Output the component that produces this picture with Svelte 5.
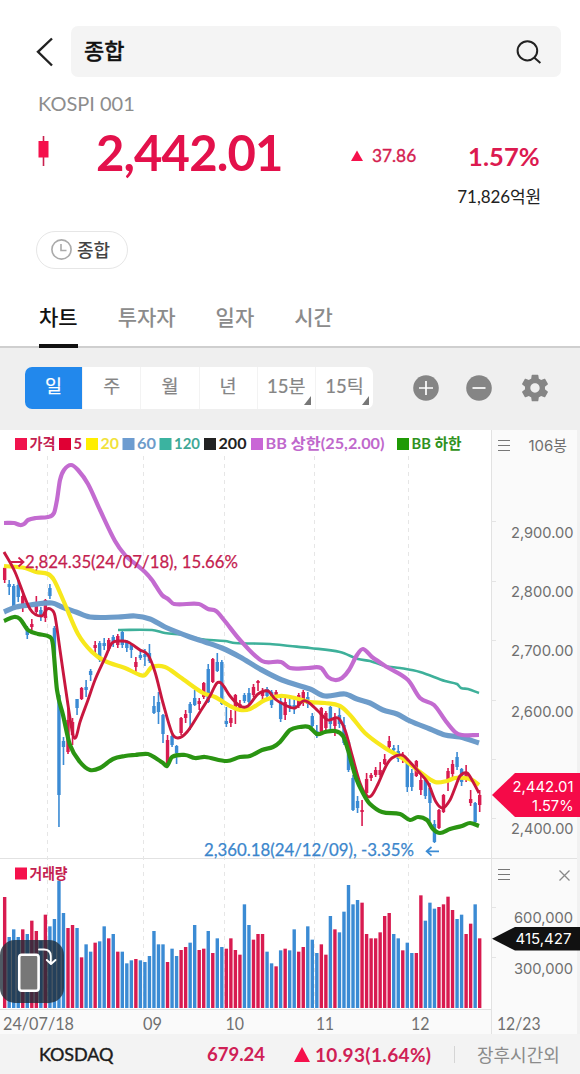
<script>
  const RED = '#d81b50';
  const BLUE = '#3b8bd4';
  const FIRST = 4.67;
  const STEP = 4.524;
  const xAt = (i) => FIRST + i * STEP;

  // high, body top, body bottom, low, direction
  const candles = [
    [567,568,580,583,'r'],[580,584,587,595,'b'],[584,586,606,609,'b'],[581,585,597,602,'b'],[591,596,606,612,'r'],
    [626,628,635,639,'b'],[619,624,627,631,'r'],[596,603,612,615,'r'],[607,610,615,621,'b'],[599,600,618,622,'r'],
    [584,588,596,599,'b'],[626,628,655,660,'b'],[694,695,795,827,'b'],[737,741,747,765,'b'],[703,720,752,754,'r'],
    [718,722,735,745,'r'],[699,699,708,715,'b'],[687,688,699,700,'r'],[680,687,690,697,'b'],[669,671,675,681,'b'],
    [641,645,648,653,'r'],[641,643,660,662,'b'],[638,643,646,650,'b'],[638,640,649,651,'r'],[635,637,643,647,'b'],
    [634,636,645,648,'r'],[630,632,645,648,'b'],[640,642,648,652,'b'],[643,645,650,658,'b'],[657,662,667,672,'r'],
    [650,655,658,660,'b'],[649,654,657,666,'b'],[644,653,661,663,'b'],[696,706,713,714,'b'],[692,702,712,724,'b'],
    [714,715,734,743,'b'],[735,740,765,767,'r'],[734,736,745,747,'b'],[745,746,753,764,'b'],[717,718,733,735,'r'],
    [710,714,718,723,'r'],[702,704,713,730,'b'],[690,698,705,706,'b'],[698,701,704,710,'r'],[682,683,697,699,'r'],
    [664,669,702,703,'b'],[658,659,682,683,'r'],[653,662,671,672,'b'],[660,662,704,705,'b'],[707,721,724,727,'b'],
    [710,718,723,727,'r'],[694,695,710,724,'r'],[700,704,708,712,'r'],[693,695,701,703,'b'],[688,693,702,704,'b'],
    [684,687,695,697,'r'],[680,681,683,691,'r'],[688,691,696,700,'r'],[687,689,696,700,'b'],[690,692,705,708,'b'],
    [690,692,697,700,'r'],[697,701,719,722,'b'],[697,702,715,720,'r'],[698,705,708,712,'b'],[697,705,709,714,'b'],
    [693,695,706,708,'r'],[690,692,703,706,'r'],[692,697,704,708,'b'],[713,716,726,727,'b'],[725,731,736,738,'b'],
    [707,708,733,735,'r'],[711,713,728,733,'r'],[706,707,724,733,'b'],[713,719,726,736,'r'],[705,715,724,728,'b'],
    [717,725,743,745,'b'],[740,742,770,772,'b'],[775,778,810,811,'b'],[796,801,808,813,'b'],[800,810,812,826,'r'],
    [773,779,793,795,'r'],[773,775,778,781,'r'],[767,770,775,777,'r'],[762,770,775,777,'r'],[754,759,764,765,'r'],
    [736,741,747,749,'r'],[745,748,750,753,'b'],[745,751,759,762,'b'],[752,755,758,763,'r'],[761,763,787,792,'b'],
    [769,773,787,791,'b'],[760,761,776,777,'r'],[772,780,790,795,'r'],[777,780,796,799,'b'],[783,788,803,821,'b'],
    [820,824,842,843,'b'],[809,810,828,829,'r'],[794,795,812,813,'r'],[768,771,781,791,'r'],[760,764,774,777,'r'],
    [752,757,767,770,'b'],[768,769,782,786,'b'],[765,772,779,782,'r'],[790,799,803,806,'r'],[802,803,822,826,'b'],
    [790,795,805,812,'r'],
  ];

  // volume bar heights, in thirds of a pixel, measured up from the base line
  const volumes = [
    333,213,236,213,236,222,262,231,202,280,245,267,382,285,240,249,240,152,191,169,196,200,245,209,222,169,169,134,143,147,
    143,138,156,231,191,191,138,178,156,174,183,196,249,174,178,231,165,209,183,178,209,174,160,311,249,205,222,222,169,134,
    125,173,178,173,236,169,183,245,205,165,191,160,276,236,227,289,369,311,324,316,222,209,209,227,276,285,222,209,173,196,
    165,165,338,262,316,298,303,311,334,294,267,280,222,253,311,209,
  ];
  const volumeColors = [
    'rbbbrbrrbr', 'bbbbrrbrbb', 'rbbrbrbbbr', 'bbbbbbrbbr', 'rbbrrbrbbr', 'rrrbbrrrbb',
    'rbrbbrrbbb', 'rrbrbbbbbr', 'rrrrrrbbrb', 'brrbbbrrrr', 'bbrrbr',
  ].join('');

  const lines = [
    { color: '#3eb09a', width: 2.6, pts: [118,630,152,630,165,633,185,635,200,639,225,641,235,643,270,644,290,646,310,648,340,652,358,659,370,661,385,666,400,668,420,672,445,681,457,684,461,688,468,689,479,693] },
    { color: '#6d9cca', width: 5.2, pts: [4,612,16,607,30,605,52,603,62,607,76,612,90,617,118,617,135,616,150,619,165,627,190,637,205,642,222,648,240,657,260,669,282,680,310,689,325,696,345,694,357,699,370,703,383,710,397,714,410,721,430,729,445,735,460,737,479,743] },
    { color: '#f7e81c', width: 4.2, pts: [4,566,25,568,36,572,48,574,54,580,64,602,78,634,92,652,105,661,125,668,140,675,145,675,152,667,165,667,180,677,203,693,215,697,230,706,240,710,250,709,265,700,280,696,295,698,310,702,325,703,340,706,350,715,365,733,385,748,402,758,420,772,435,782,447,781,455,778,465,778,472,780,479,785] },
    { color: '#c8173f', width: 2.9, pts: [4,552,15,572,30,609,42,616,47,609,52,610,55,616,60,650,68,705,73,735,76,737,80,722,88,700,95,680,105,658,112,643,120,641,128,642,140,650,148,655,155,672,163,703,172,733,178,738,187,732,200,712,210,696,217,683,222,684,230,696,240,706,248,706,258,694,268,691,275,699,285,705,295,708,303,701,308,702,318,711,328,720,338,718,345,730,352,755,360,783,367,796,372,795,378,784,386,766,392,758,402,755,408,760,418,771,428,783,436,802,443,808,450,800,455,788,460,776,467,773,472,780,479,793] },
    { color: '#c36bd0', width: 4.2, pts: [4,523,14,523,20,525,24,524,28,520,36,518,48,517,54,513,57,500,60,480,64,470,71,465,78,470,88,484,100,510,115,541,125,555,133,562,145,572,152,580,154,583,162,595,168,599,174,604,199,604,208,609,216,611,224,620,240,640,262,661,281,662,290,668,308,668,321,668,328,677,335,680,342,678,349,670,357,655,363,649,372,657,387,667,408,680,420,698,434,705,445,720,455,732,462,735,479,735] },
    { color: '#2a9412', width: 4.2, pts: [4,621,14,617,20,619,28,630,38,634,50,637,53,645,57,690,63,715,70,745,80,762,90,770,100,768,113,759,125,756,135,755,148,754,157,759,163,763,167,766,172,757,185,755,195,758,205,757,227,761,240,757,250,756,262,750,273,747,280,742,290,730,300,727,309,727,317,734,325,732,335,731,343,736,348,750,356,778,364,795,370,804,382,812,400,814,410,820,418,817,427,820,433,829,440,833,450,829,462,826,470,823,479,826] },
  ];

  // smooth path through the points, tangents taken from each point's neighbours
  function curve(p) {
    const n = p.length / 2;
    const m = [];
    for (let i = 0; i < n; i++) {
      const a = Math.max(0, i - 1);
      const b = Math.min(n - 1, i + 1);
      m.push((p[b * 2 + 1] - p[a * 2 + 1]) / (p[b * 2] - p[a * 2]));
    }
    let d = `M${p[0]} ${p[1]}`;
    for (let i = 1; i < n; i++) {
      const x0 = p[i * 2 - 2], y0 = p[i * 2 - 1], x1 = p[i * 2], y1 = p[i * 2 + 1];
      const h = (x1 - x0) / 3;
      d += `C${x0 + h} ${y0 + m[i - 1] * h} ${x1 - h} ${y1 - m[i] * h} ${x1} ${y1}`;
    }
    return d;
  }

  const legend = [
    { x: 15, text: '가격', w: 26, color: '#c4214f', box: '#f0134d' },
    { x: 59, text: '5', w: 8.5, color: '#c4214f', box: '#e00034' },
    { x: 86, text: '20', w: 18.5, color: '#f1e23c', box: '#ffee00' },
    { x: 122.5, text: '60', w: 19, color: '#6d9cca', box: '#6d9cd0' },
    { x: 159.5, text: '120', w: 26, color: '#3fa896', box: '#3bb3a0' },
    { x: 204, text: '200', w: 28, color: '#222', box: '#222' },
    { x: 251, text: 'BB 상한(25,2.00)', w: 119, color: '#bf68cc', box: '#c966d6' },
    { x: 397, text: 'BB 하한', w: 50, color: '#2f9220', box: '#1f9a05' },
  ];
  const priceAxis = [
    ['2,900.00', 533], ['2,800.00', 592], ['2,700.00', 651], ['2,600.00', 711.5], ['2,400.00', 829],
  ];
  const months = [['24/07/18', 3, 71], ['09', 143, 19], ['10', 225.5, 18.5], ['11', 316, 18], ['12', 411, 18.5]];
  const grid = [47.5, 143.5, 224.5, 314.5, 408.5];
  const tabs = ['차트', '투자자', '일자', '시간'];
  const periods = ['일', '주', '월', '년', '15분', '15틱'];
</script>

<main>
  <header>
    <svg class="back" width="18" height="30" viewBox="0 0 18 30"><path d="M16 1.5L2 14.8L16 28.5" /></svg>
    <div class="search">
      <span>종합</span>
      <svg width="28" height="26" viewBox="0 0 28 26"><ellipse cx="12.4" cy="11.8" rx="9.8" ry="9.6" /><path d="M19.4 18.8L25.4 24" /></svg>
    </div>
  </header>

  <div class="code">KOSPI 001</div>
  <section class="quote">
    <svg class="candle" width="12" height="30" viewBox="0 0 12 30"><path d="M5.5 0V30" stroke="#c9204e" stroke-width="1.6" /><rect x="0.5" y="5" width="10" height="16.5" fill="#f5114c" /></svg>
    <strong class="price">2,442.01</strong>
    <span class="change"><svg width="12" height="11"><path d="M6 .5L12 11H0Z" fill="#f5114c" /></svg>37.86</span>
    <strong class="rate">1.57%</strong>
  </section>
  <div class="amount">71,826억원</div>

  <div class="chips">
    <button class="chip">
      <svg width="21" height="21" viewBox="0 0 21 21"><circle cx="10.5" cy="10.5" r="9.6" /><path d="M10 5V11.5H15.5" /></svg>
      종합
    </button>
  </div>

  <nav>
    {#each tabs as tab, i}
      <span class:active={i === 0}>{tab}</span>
    {/each}
  </nav>

  <section class="toolbar">
    <div class="periods">
      {#each periods as p, i}
        <span class:on={i === 0} class:more={i > 3}>{p}</span>
      {/each}
    </div>
    <svg class="tool" width="26" height="26" viewBox="0 0 26 26"><circle cx="13" cy="13" r="12.8" fill="#858585" /><path d="M6 13H20M13 6V20" stroke="#fff" stroke-width="1.7" /></svg>
    <svg class="tool" width="26" height="26" viewBox="0 0 26 26"><circle cx="13" cy="13" r="12.8" fill="#858585" /><path d="M6.5 13H19.5" stroke="#fff" stroke-width="1.7" /></svg>
    <svg class="tool gear" width="32" height="32" viewBox="0 0 24 24"><path fill="#858585" d="M19.43 12.98c.04-.32.07-.64.07-.98s-.03-.66-.07-.98l2.11-1.65c.19-.15.24-.42.12-.64l-2-3.46c-.12-.22-.39-.3-.61-.22l-2.49 1c-.52-.4-1.08-.73-1.69-.98l-.38-2.65C14.46 2.18 14.25 2 14 2h-4c-.25 0-.46.18-.49.42l-.38 2.65c-.61.25-1.17.59-1.69.98l-2.49-1c-.23-.09-.49 0-.61.22l-2 3.46c-.13.22-.07.49.12.64l2.11 1.65c-.04.32-.07.65-.07.98s.03.66.07.98l-2.11 1.65c-.19.15-.24.42-.12.64l2 3.46c.12.22.39.3.61.22l2.49-1c.52.4 1.08.73 1.69.98l.38 2.65c.03.24.24.42.49.42h4c.25 0 .46-.18.49-.42l.38-2.65c.61-.25 1.17-.59 1.69-.98l2.49 1c.23.09.49 0 .61-.22l2-3.46c.12-.22.07-.49-.12-.64l-2.11-1.65zM12 15.5c-1.93 0-3.5-1.57-3.5-3.5s1.57-3.5 3.5-3.5 3.5 1.57 3.5 3.5-1.57 3.5-3.5 3.5z" /></svg>
  </section>

  <svg class="chart" width="580" height="604" viewBox="0 430 580 604">
    <rect x="0" y="1009" width="580" height="25" fill="#fafafa" />
    <rect x="491" y="430" width="89" height="604" fill="#fafafa" />
    <path d="M491.5 430V1034M0 858.5H580M0 1009.5H491" stroke="#e2e2e2" fill="none" />
    <path d="M578.5 430V1034" stroke="#f1f1f1" stroke-width="3" />
    <g stroke="#e6e6e6" stroke-dasharray="4 4">
      {#each grid as x}<path d="M{x} 456V1009" />{/each}
    </g>
    {#each [521.5, 581.5, 640.5, 700.5, 759.5, 818.5, 907.5, 957.5] as y}
      <path d="M491 {y}H496" stroke="#e4e4e4" />
    {/each}

    {#each candles as [h, t, b, l, c], i}
      <g fill={c === 'r' ? RED : BLUE}>
        <rect x={xAt(i) - 0.8} y={h} width="1.6" height={l - h} />
        <rect x={xAt(i) - 1.7} y={t} width="3.4" height={b - t} />
      </g>
    {/each}
    {#each lines as line}
      <path d={curve(line.pts)} fill="none" stroke={line.color} stroke-width={line.width} stroke-linejoin="round" />
    {/each}

    {#each volumes as v, i}
      <rect x={xAt(i) - 1.7} y={1008 - v / 3} width="3.4" height={v / 3} fill={volumeColors[i] === 'r' ? RED : BLUE} />
    {/each}

    <g class="legend">
      {#each legend as item}
        <rect x={item.x} y="438" width="12" height="12" fill={item.box} />
        <text x={item.x + 14.5} y="449" fill={item.color} textLength={item.w} lengthAdjust="spacingAndGlyphs">{item.text}</text>
      {/each}
      <rect x="15" y="867.5" width="12" height="12" fill="#f5114c" />
      <text x="29.5" y="878.5" fill="#c4214f" textLength="38" lengthAdjust="spacingAndGlyphs">거래량</text>
    </g>

    <g class="note">
      <path d="M10 562H23M18.5 557.5L23.5 562L18.5 566.5" stroke="#d01c4c" stroke-width="1.8" fill="none" />
      <text x="25" y="568" fill="#c4214f" stroke="#c4214f" textLength="213" lengthAdjust="spacingAndGlyphs">2,824.35(24/07/18), 15.66%</text>
      <text x="204" y="856" fill="#3b86cc" stroke="#3b86cc" textLength="210" lengthAdjust="spacingAndGlyphs">2,360.18(24/12/09), -3.35%</text>
      <path d="M439 851.3H427M431.5 847L426.7 851.3L431.5 855.6" stroke="#3b8bd4" stroke-width="1.8" fill="none" />
    </g>

    <g class="axis">
      <path d="M498 440.5H510M498 445.5H510M498 450.5H510M498 869.5H510M498 874.5H510M498 879.5H510" stroke="#777" stroke-width="1.2" />
      <path d="M559.5 870.5L569.5 880.5M569.5 870.5L559.5 880.5" stroke="#888" stroke-width="1.3" />
      <text x="528.5" y="451" textLength="38.5" lengthAdjust="spacingAndGlyphs">106봉</text>
      {#each priceAxis as [label, y]}
        <text x="511" y={y + 5.2} textLength="62.5" lengthAdjust="spacingAndGlyphs">{label}</text>
      {/each}
      <text x="514" y="923" textLength="59" lengthAdjust="spacingAndGlyphs">600,000</text>
      <text x="514" y="973.5" textLength="59" lengthAdjust="spacingAndGlyphs">300,000</text>
      <path d="M492 795L515 773H580V817H515Z" fill="#f50a48" />
      <text class="light" x="512.5" y="791.5" textLength="61" lengthAdjust="spacingAndGlyphs">2,442.01</text>
      <text class="light" x="532" y="811" textLength="41.5" lengthAdjust="spacingAndGlyphs">1.57%</text>
      <path d="M492 938.7L515 927H580V950.5H515Z" fill="#111" />
      <text class="light" x="515.5" y="944" textLength="56" lengthAdjust="spacingAndGlyphs">415,427</text>
    </g>

    <g class="dates">
      {#each months as [m, x, w]}
        <text {x} y="1029.5" textLength={w} lengthAdjust="spacingAndGlyphs">{m}</text>
      {/each}
      <text x="497" y="1029.5" textLength="43.5" lengthAdjust="spacingAndGlyphs">12/23</text>
    </g>

    <g fill="none" stroke="#fff" stroke-linecap="round" stroke-linejoin="round">
      <rect x="0" y="940" width="64" height="63" rx="15" fill="#1e2b38" fill-opacity=".78" stroke="none" />
      <rect x="19.2" y="954.7" width="19.4" height="36" rx="2.5" fill="#777" stroke-width="2.6" />
      <path d="M39 949.5H44Q50.5 949.5 50.8 956V963M46.8 960L51 964L55.5 960" stroke-width="1.9" />
    </g>
  </svg>

  <footer>
    <b class="name">KOSDAQ</b>
    <b class="index">679.24</b>
    <b class="diff"><svg width="16" height="15"><path d="M8 0L16 15H0Z" fill="#f5114c" /></svg>10.93(1.64%)</b>
    <i></i>
    <span>장후시간외</span>
  </footer>
</main>

<style>
  :global(body) { margin: 0; background: #fff; }
  main {
    width: 580px;
    height: 1074px;
    overflow: hidden;
    font-family: Lato, "Noto Sans CJK KR", sans-serif;
    color: #222;
  }
  svg { display: block; flex: none; }
  header { display: flex; align-items: center; padding: 26px 19px 0 36px; height: 51px; }
  .back { margin-right: 17px; fill: none; stroke: #222; stroke-width: 2.4; }
  .search {
    flex: 1; height: 51px; border-radius: 7px; background: #f4f4f4; box-sizing: border-box;
    display: flex; align-items: center; justify-content: space-between; padding: 0 18px 0 13px;
    font-size: 22px; font-weight: 500; color: #111;
  }
  .search span { padding-bottom: 5px; -webkit-text-stroke: .3px; }
  .search svg { fill: none; stroke: #222; stroke-width: 2; }
  .code { margin-top: 12px; padding-left: 38px; height: 28px; line-height: 29px; font-size: 20px; color: #8d8d8d; }
  .quote { display: flex; align-items: center; height: 60px; margin-top: 6px; padding-left: 38px; color: #e3114b; }
  .candle { margin-right: 46px; margin-top: -4px; }
  .price { width: 255px; font-size: 49px; line-height: 60px; letter-spacing: -0.9px; padding-bottom: 2px; }
  .change { display: flex; align-items: center; gap: 9px; width: 117px; font-size: 17.3px; padding-top: 5px; color: #d41d50; -webkit-text-stroke: .35px; }
  .rate { font-size: 25.5px; letter-spacing: .1px; padding-top: 6px; color: #dc1a50; }
  .amount { height: 24px; line-height: 25px; margin-top: 1px; padding-right: 39px; text-align: right; font-size: 17px; letter-spacing: -.1px; }
  .chips { padding: 23px 36px 0; height: 38px; }
  .chip {
    display: flex; align-items: center; gap: 5px; width: 92px; height: 38px; box-sizing: border-box; padding: 0 0 2px 14px;
    border: 1.5px solid #e6e6e6; border-radius: 19px; background: #fff; font: 500 18px "Noto Sans CJK KR", sans-serif; color: #444;
    white-space: nowrap;
  }
  .chip svg { fill: none; stroke: #aaa; stroke-width: 1.6; }
  nav {
    display: flex; gap: 40px; height: 79px; box-sizing: border-box; border-bottom: 2px solid #cfcfcf; padding: 18px 39px 0;
    font-size: 21px; line-height: 59px; color: #8b8b8b; font-weight: 500;
  }
  nav span { height: 61px; box-sizing: border-box; }
  nav .active { color: #111; border-bottom: 4px solid #111; }
  .toolbar { display: flex; align-items: center; height: 82px; padding: 0 0 0 25px; background: #efefef; }
  .periods { display: flex; width: 348px; height: 42px; margin: -2px 40px 0 0; border-radius: 7px; overflow: hidden; background: #fff; }
  .periods span {
    position: relative; flex: 1; text-align: center; font-size: 18.5px; line-height: 39px; color: #858585; -webkit-text-stroke: .2px;
    border-left: 1px solid #f3f3f3; box-sizing: border-box;
  }
  .periods .on { background: #2288ec; color: #fff; border: 0; }
  .periods .more::after {
    content: ''; position: absolute; right: 4px; bottom: 4px; border-style: solid; border-width: 0 0 9px 7.5px;
    border-color: transparent transparent #777 transparent;
  }
  .tool { margin-right: 27px; margin-top: -3px; }
  .gear { margin-right: 0; }
  .legend { font-size: 15.3px; font-weight: 700; }
  .note { font-size: 16.8px; stroke-width: .25px; }
  .axis { font-family: Inter, "Noto Sans CJK KR", sans-serif; font-size: 15px; fill: #6f6f6f; }
  .axis .light { fill: #fff; }
  .dates { font-size: 17px; fill: #707070; }
  footer { display: flex; align-items: center; height: 40px; background: #f3f3f3; padding-left: 39px; font-size: 18px; color: #8b8b8b; }
  footer b { color: #cf2055; font-weight: 700; white-space: nowrap; }
  footer .name { width: 168px; color: #1c1c1c; font-weight: 400; letter-spacing: -.1px; -webkit-text-stroke: .4px; }
  footer .index { width: 87px; font-size: 18.5px; }
  footer .diff { display: flex; align-items: center; gap: 5px; width: 160px; font-size: 19px; letter-spacing: .35px; }
  footer i { width: 1px; height: 17px; background: #d5d5d5; margin-right: 22px; }
  footer span { white-space: nowrap; }
</style>
